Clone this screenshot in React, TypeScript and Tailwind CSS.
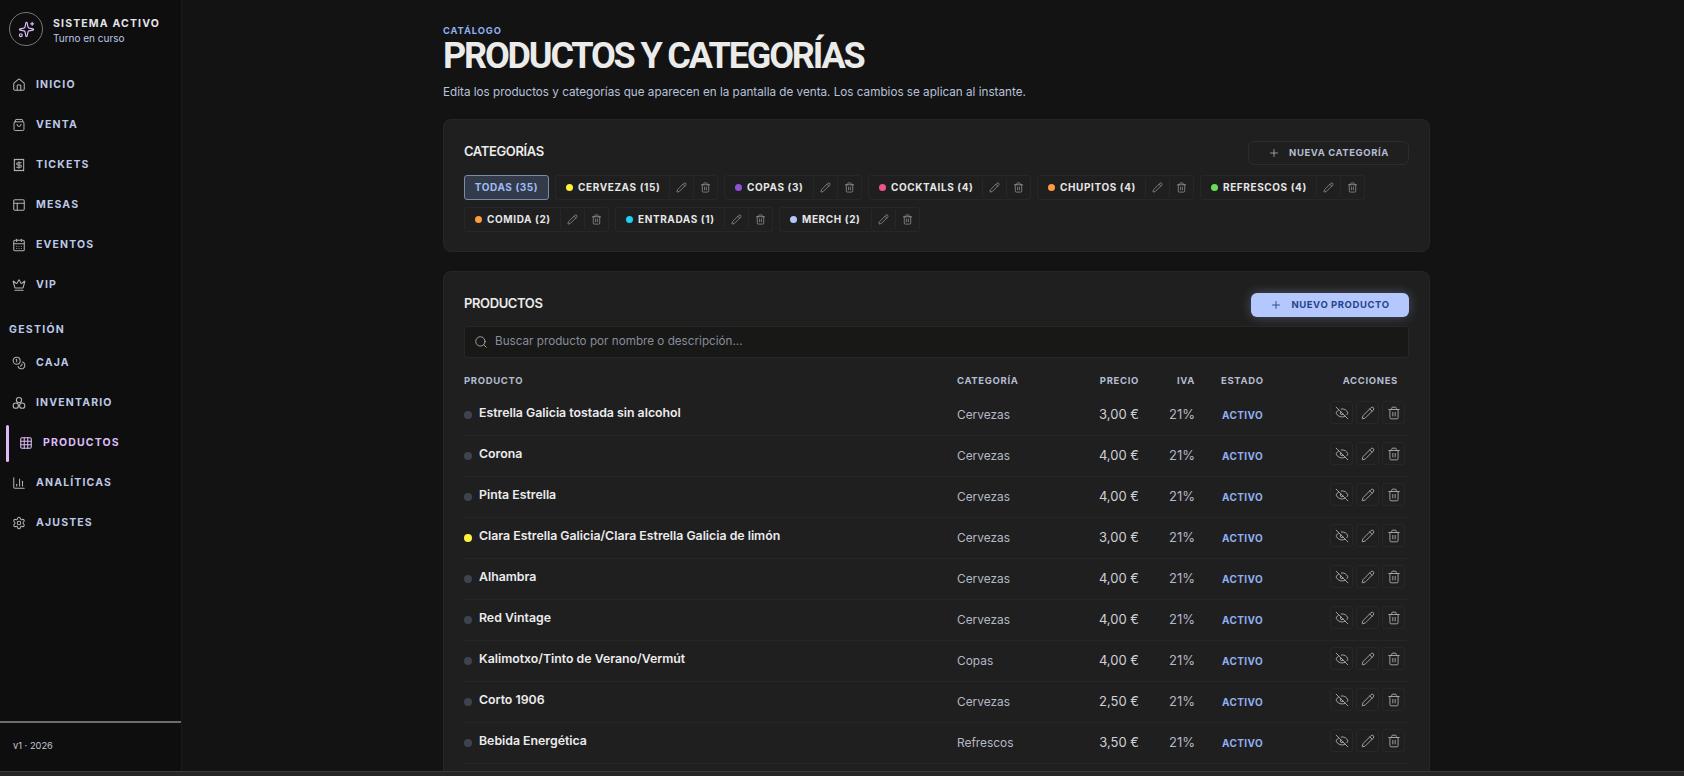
import React from 'react'
import {
  BarChart3,
  CalendarDays,
  Coins,
  Crown,
  EyeOff,
  Grid3x3,
  House,
  PanelsTopLeft,
  Pencil,
  Plus,
  Receipt,
  Search,
  Settings,
  Sparkles,
  Trash2,
} from 'lucide-react'

const SANS = "font-['Inter',sans-serif]"

type NavItem = { label: string; icon: React.ElementType; active?: boolean }

// lucide's bag has a different shape, this one has the flap and the smile
function BagIcon({ className }: { className?: string }) {
  return (
    <svg viewBox="0 0 24 24" fill="none" stroke="currentColor" strokeWidth={1.7} strokeLinejoin="round" strokeLinecap="round" className={className}>
      <rect x="3.5" y="6.5" width="17" height="15" rx="2" />
      <path d="M5 6.5 6.5 2.5h11l1.5 4" />
      <path d="M8.5 11a3.5 3.5 0 0 0 7 0" />
    </svg>
  )
}

function ClusterIcon({ className }: { className?: string }) {
  return (
    <svg viewBox="0 0 24 24" fill="none" stroke="currentColor" strokeWidth={1.9} className={className}>
      <circle cx="12" cy="7" r="4.5" />
      <circle cx="6.5" cy="16.5" r="4.5" />
      <circle cx="17.5" cy="16.5" r="4.5" />
    </svg>
  )
}

const mainNav: NavItem[] = [
  { label: 'INICIO', icon: House },
  { label: 'VENTA', icon: BagIcon },
  { label: 'TICKETS', icon: Receipt },
  { label: 'MESAS', icon: PanelsTopLeft },
  { label: 'EVENTOS', icon: CalendarDays },
  { label: 'VIP', icon: Crown },
]

const adminNav: NavItem[] = [
  { label: 'CAJA', icon: Coins },
  { label: 'INVENTARIO', icon: ClusterIcon },
  { label: 'PRODUCTOS', icon: Grid3x3, active: true },
  { label: 'ANALÍTICAS', icon: BarChart3 },
  { label: 'AJUSTES', icon: Settings },
]

const categories = [
  { label: 'CERVEZAS (15)', dot: 'bg-[#fff23d]', w: 'w-[163px]' },
  { label: 'COPAS (3)', dot: 'bg-[#9350d8]', w: 'w-[138px]' },
  { label: 'COCKTAILS (4)', dot: 'bg-[#f0558a]', w: 'w-[163px]' },
  { label: 'CHUPITOS (4)', dot: 'bg-[#ff9a3d]', w: 'w-[157px]' },
  { label: 'REFRESCOS (4)', dot: 'bg-[#6bdc5a]', w: 'w-[165px]' },
  { label: 'COMIDA (2)', dot: 'bg-[#ff9a3d]', w: 'w-[145px]' },
  { label: 'ENTRADAS (1)', dot: 'bg-[#1fd0f5]', w: 'w-[158px]' },
  { label: 'MERCH (2)', dot: 'bg-[#b4c6fc]', w: 'w-[141px]' },
]

const products = [
  { name: 'Estrella Galicia tostada sin alcohol', cat: 'Cervezas', price: '3,00 €' },
  { name: 'Corona', cat: 'Cervezas', price: '4,00 €' },
  { name: 'Pinta Estrella', cat: 'Cervezas', price: '4,00 €' },
  { name: 'Clara Estrella Galicia/Clara Estrella Galicia de limón', cat: 'Cervezas', price: '3,00 €', yellow: true },
  { name: 'Alhambra', cat: 'Cervezas', price: '4,00 €' },
  { name: 'Red Vintage', cat: 'Cervezas', price: '4,00 €' },
  { name: 'Kalimotxo/Tinto de Verano/Vermút', cat: 'Copas', price: '4,00 €' },
  { name: 'Corto 1906', cat: 'Cervezas', price: '2,50 €' },
  { name: 'Bebida Energética', cat: 'Refrescos', price: '3,50 €' },
]

function NavLink({ item }: { item: NavItem }) {
  const Icon = item.icon
  if (item.active) {
    return (
      <div className="flex h-10 items-center">
        <span className="ml-1.5 h-[37px] w-[3px] rounded-full bg-[#dcbcf8]" />
        <Icon className="ml-[10px] size-[14px] text-[#dcbcf8]" strokeWidth={1.8} />
        <span className="ml-[10px] text-[10.5px] font-bold tracking-[0.11em] text-[#dcbcf8]">{item.label}</span>
      </div>
    )
  }
  return (
    <div className="flex h-10 items-center pl-3">
      <Icon className="size-[14px] text-[#b0b0b6]" strokeWidth={1.8} />
      <span className="ml-[10px] text-[10.5px] font-bold tracking-[0.11em] text-[#bcc8e6]">{item.label}</span>
    </div>
  )
}

function Sidebar() {
  return (
    <aside className="flex h-full w-[182px] shrink-0 flex-col border-r border-[#1a1a1b] bg-[#0e0e0f]">
      <div className="flex items-center pl-[9px] pt-3">
        <div className="flex size-[34px] items-center justify-center rounded-full border border-[#77777c]">
          <Sparkles className="size-[17px] text-[#dcbcf8]" strokeWidth={1.7} />
        </div>
        <div className="ml-[10px] mt-0.5">
          <div className="text-[10.5px] font-bold leading-[15px] tracking-[0.11em] text-[#e4e4e8]">SISTEMA ACTIVO</div>
          <div className="text-[10px] leading-[14px] text-[#bcc8e6]">Turno en curso</div>
        </div>
      </div>
      <nav className="mt-[19px]">
        {mainNav.map((item) => (
          <NavLink key={item.label} item={item} />
        ))}
      </nav>
      <div className="mb-[5px] ml-[9px] mt-[17px] text-[10.5px] font-bold leading-[16px] tracking-[0.12em] text-[#bcc8e6]">GESTIÓN</div>
      <nav>
        {adminNav.map((item) => (
          <NavLink key={item.label} item={item} />
        ))}
      </nav>
      <div className="mt-auto h-[50px] border-t-2 border-[#6c6c72] pl-[13px] pt-4 text-[9.3px] leading-[14px] text-[#c2c6d2]">
        v1 · 2026
      </div>
    </aside>
  )
}

function CategoryChip({ label, dot, w }: { label: string; dot: string; w: string }) {
  return (
    <div className={`flex h-[25px] items-center rounded-[3px] border border-[#272728] ${w}`}>
      <div className="flex h-full flex-1 items-center pl-[10px]">
        <span className={`size-[7px] rounded-full ${dot}`} />
        <span className="ml-[5px] whitespace-nowrap text-[10px] font-bold tracking-[0.06em] text-[#e6e6e8]">{label}</span>
      </div>
      <div className="flex h-[19px] w-[24px] items-center justify-center border-l border-[#272728]">
        <Pencil className="size-[11px] text-[#99999e]" strokeWidth={1.6} />
      </div>
      <div className="flex h-[19px] w-[24px] items-center justify-center border-l border-[#272728]">
        <Trash2 className="size-[11px] text-[#99999e]" strokeWidth={1.6} />
      </div>
    </div>
  )
}

function ActionButton({ icon: Icon }: { icon: React.ElementType }) {
  return (
    <div className="flex size-[23px] items-center justify-center rounded-[3px] border border-[#272728]">
      <Icon className="size-[14px] text-[#a8a8ad]" strokeWidth={1.6} />
    </div>
  )
}

const rowGrid = 'grid grid-cols-[493px_132px_50px_56px_110px_103px] items-center'

function RowActions() {
  return (
    <div className="-mt-1 flex justify-end gap-[3px] pr-[3px]">
      <ActionButton icon={EyeOff} />
      <ActionButton icon={Pencil} />
      <ActionButton icon={Trash2} />
    </div>
  )
}

function ProductRow({ p }: { p: (typeof products)[number] }) {
  return (
    <div className={`${rowGrid} h-[41px] border-b border-[#262627]`}>
      <div className="flex items-center">
        <span className={`mr-[7px] size-2 rounded-full ${p.yellow ? 'bg-[#fff23d]' : 'bg-[#3d4450]'}`} />
        <span className="-mt-0.5 text-[12.3px] font-semibold text-[#ececee]">{p.name}</span>
      </div>
      <div className="text-[11.9px] text-[#b4b8c4]">{p.cat}</div>
      <div className="whitespace-nowrap text-right text-[13px] text-[#d0d0d6]">{p.price}</div>
      <div className="text-right text-[13px] text-[#b4b8c4]">21%</div>
      <div className="mt-0.5 pl-[27px] text-[10px] font-bold tracking-[0.04em] text-[#8fb0f0]">ACTIVO</div>
      <RowActions />
    </div>
  )
}

export default function App() {
  return (
    <div className={`${SANS} flex h-[776px] w-full flex-col overflow-hidden bg-[#131314]`}>
      <div className="flex min-h-0 flex-1">
        <Sidebar />
        <main className="min-w-0 flex-1 overflow-hidden pl-[261px] pt-[25px]">
          <div className="w-[987px]">
            <div className="text-[9.3px] font-bold leading-3 tracking-[0.1em] text-[#8fb0f0]">CATÁLOGO</div>
            <h1 className="-mt-px whitespace-nowrap font-['Roboto',sans-serif] text-[36px] font-bold leading-[40px] tracking-[-0.06em] text-[#ebebe9]">
              PRODUCTOS Y CATEGORÍAS
            </h1>
            <p className="mt-[7px] text-[11.7px] leading-[18px] text-[#b8c2da]">
              Edita los productos y categorías que aparecen en la pantalla de venta. Los cambios se aplican al instante.
            </p>

            <section className="mt-[18px] h-[133px] rounded-lg border border-[#262627] bg-[#1f1f1f] px-5 pt-[21px]">
              <div className="flex h-6 items-center justify-between">
                <h2 className="-mt-0.5 text-[13px] font-semibold tracking-[-0.03em] text-[#ebebe9]">CATEGORÍAS</h2>
                <button className="flex h-6 w-[161px] items-center justify-center gap-[9px] rounded-md border border-[#2c2c2d] text-[9.5px] font-bold tracking-[0.06em] text-[#b4bccf]">
                  <Plus className="size-3" strokeWidth={1.5} />
                  NUEVA CATEGORÍA
                </button>
              </div>
              <div className="mt-[10px] flex flex-wrap gap-x-[6px] gap-y-[7px]">
                <div className="flex h-[25px] w-[85px] items-center justify-center rounded-[3px] border border-[#7a8aa8] bg-[#333b4b] text-[10px] font-bold tracking-[0.06em] text-[#9fbcf5]">
                  TODAS (35)
                </div>
                {categories.map((c) => (
                  <CategoryChip key={c.label} {...c} />
                ))}
              </div>
            </section>

            <section className="mt-[19px] rounded-lg border border-[#262627] bg-[#1f1f1f] px-5 pt-[21px]">
              <div className="flex h-6 items-center justify-between">
                <h2 className="-mt-0.5 text-[13px] font-semibold tracking-[-0.03em] text-[#ebebe9]">PRODUCTOS</h2>
                <button className="flex h-6 w-[158px] items-center justify-center gap-[9px] rounded-md bg-[#b4c8fd] text-[9.5px] font-bold tracking-[0.06em] text-[#28438c] shadow-[0_0_12px_rgba(180,200,253,0.3)]">
                  <Plus className="size-3" strokeWidth={1.8} />
                  NUEVO PRODUCTO
                </button>
              </div>
              <div className="mt-[9px] flex h-8 items-center rounded-[3px] border border-[#272728] bg-[#181817] pl-[9px]">
                <Search className="size-[14px] text-[#a8a8ad]" strokeWidth={1.6} />
                <span className="ml-[7px] text-[11.7px] text-[#868c9c]">Buscar producto por nombre o descripción...</span>
              </div>
              <div className={`${rowGrid} h-[36.5px] pt-[9.5px] text-[9.5px] font-bold tracking-[0.07em] text-[#b4bccf]`}>
                <div>PRODUCTO</div>
                <div>CATEGORÍA</div>
                <div className="text-right">PRECIO</div>
                <div className="text-right">IVA</div>
                <div className="pl-[26px]">ESTADO</div>
                <div className="pr-[10px] text-right">ACCIONES</div>
              </div>
              {products.map((p) => (
                <ProductRow key={p.name} p={p} />
              ))}
              {/* next row: only the top of its buttons shows above the fold */}
              <div className={`${rowGrid} h-[41px]`}>
                <div className="col-start-6">
                  <RowActions />
                </div>
              </div>
            </section>
          </div>
        </main>
      </div>
      <div className="h-[5px] shrink-0 border-t border-[#3a3a3b] bg-[#262627]" />
    </div>
  )
}
